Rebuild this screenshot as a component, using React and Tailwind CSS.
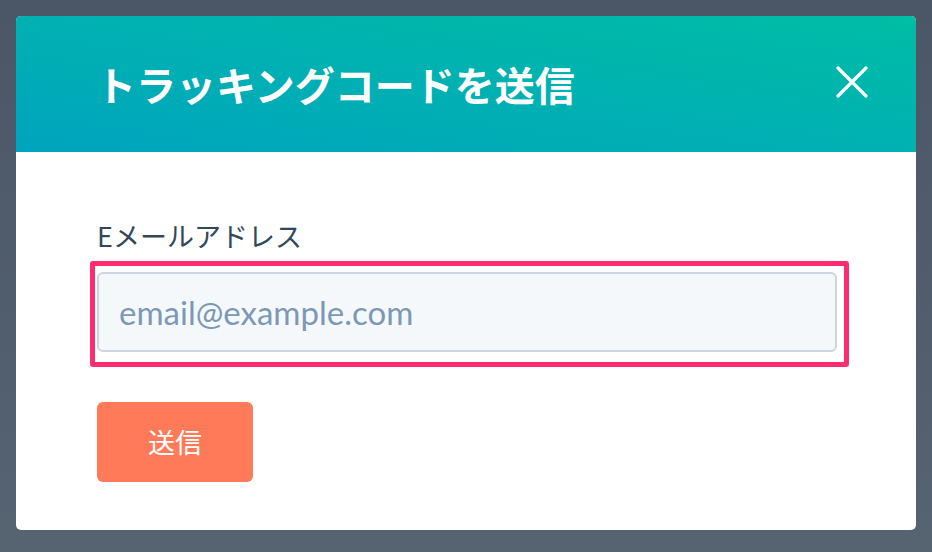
const jp = { fontFamily: '"Noto Sans CJK JP", "Noto Sans", sans-serif' };
const latin = { fontFamily: 'Lato, "Noto Sans CJK JP", sans-serif' };

export default function App() {
  return (
    <div className="w-[932px] h-[552px] bg-gradient-to-b from-[#4b5767] to-[#566371] p-4">
      <div className="w-[900px] h-[514px] bg-white rounded-[5px] overflow-hidden flex flex-col">
        {/* Header */}
        <div className="h-[136px] shrink-0 bg-gradient-to-tr from-[#00a4bd] to-[#00bda5] flex items-center justify-between pl-[80px] pr-[48px]">
          <h1 style={jp} className="text-white text-[40px] font-semibold leading-none">
            トラッキングコードを送信
          </h1>
          <button className="text-white w-[32px] h-[32px] -mt-[4px]">
            <svg width="32" height="32" viewBox="0 0 32 32" fill="none" stroke="currentColor" strokeWidth="3.2" strokeLinecap="round">
              <path d="M2 2 L30 30 M30 2 L2 30" />
            </svg>
          </button>
        </div>

        {/* Body */}
        <div className="pl-[81px] pr-[79px] pt-[64px]">
          <label style={jp} className="block text-[27px] leading-[39px] text-[#33475b]">
            Eメールアドレス
          </label>
          <div className="relative mt-[17px]">
            <input
              style={latin}
              placeholder="email@example.com"
              className="w-full h-[80px] rounded-[6px] border-2 border-[#cbd6e2] bg-[#f5f8fa] px-[20px] text-[33px] text-[#33475b] placeholder:text-[#7c98b6] outline-none"
            />
            {/* highlight annotation */}
            <div className="absolute left-[-7px] top-[-11px] right-[-12px] bottom-[-15px] border-[5px] border-[#ff2d6f] rounded-[3px] pointer-events-none" />
          </div>
          <button
            style={jp}
            className="mt-[50px] w-[156px] h-[80px] rounded-[6px] bg-[#ff7a59] text-white text-[27px]"
          >
            送信
          </button>
        </div>
      </div>
    </div>
  );
}
